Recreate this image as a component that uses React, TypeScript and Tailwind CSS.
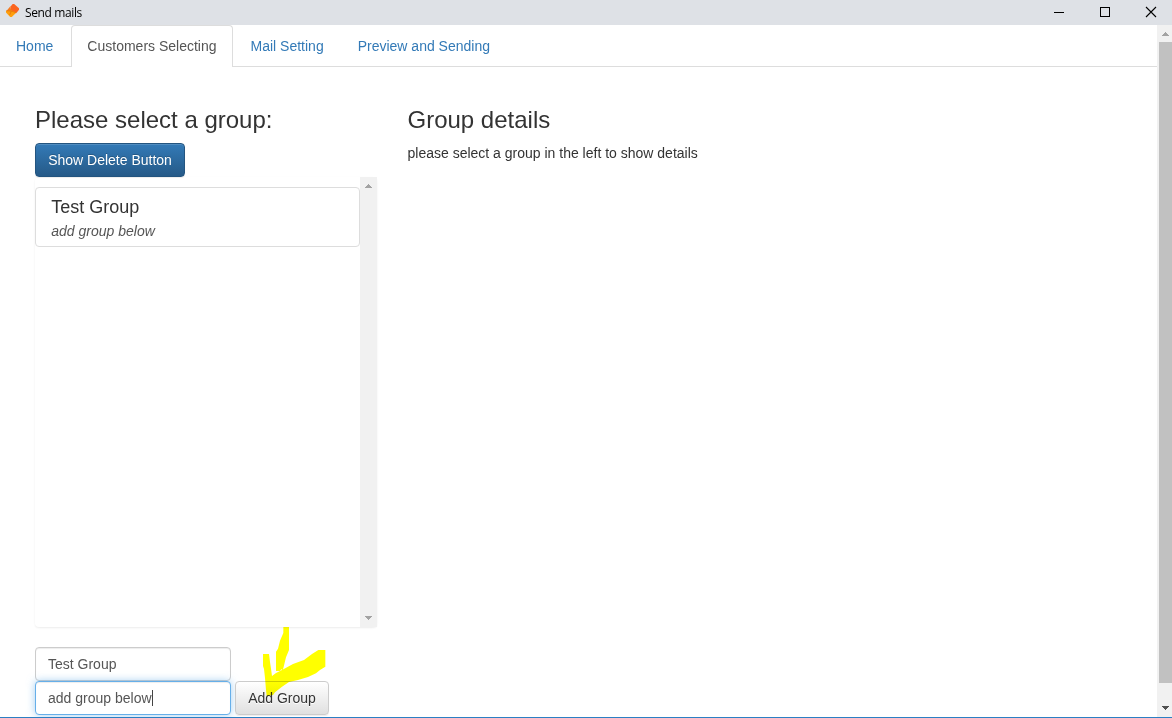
import React from "react";

const tabs = ["Home", "Customers Selecting", "Mail Setting", "Preview and Sending"];

function TitleBar() {
  return (
    <header className="flex h-[25px] shrink-0 items-center bg-[#dee1e6] pl-[5px] text-black">
      <svg width="15" height="16" viewBox="0 0 15 16" className="mb-[3px]">
        <path d="M7.6 1 H9.2 L14 5.3 V6.8 L11.2 10.2 L6.2 8.6 L5.6 3.4 Z" fill="#fb641f" />
        <path d="M5.4 3.2 L6.4 8.4 L1.4 8 Z" fill="#f47a20" />
        <path d="M1 7.8 L6.6 7.6 L11.4 9.6 L6.8 14 H5.2 L1 9.6 Z" fill="#ff9f0c" />
        <path d="M1.4 7.8 L6.4 8 L11 9.8 M6.4 8 L4.6 12" stroke="#e0700f" strokeWidth="0.7" fill="none" />
      </svg>
      <span className="ml-[5px] font-['Open_Sans',sans-serif] text-[12px] leading-[16px] tracking-[-0.38px]">Send mails</span>
      <div className="ml-auto flex">
        <svg width="46" height="25" viewBox="0 0 46 25" shapeRendering="crispEdges">
          <path d="M20 12.5h10" stroke="#000" />
        </svg>
        <svg width="46" height="25" viewBox="0 0 46 25" shapeRendering="crispEdges">
          <rect x="20.5" y="7.5" width="9" height="9" fill="none" stroke="#000" />
        </svg>
        <svg width="46" height="25" viewBox="0 0 46 25">
          <path d="M20 7l10 10M30 7l-10 10" stroke="#000" strokeWidth="1.1" />
        </svg>
      </div>
    </header>
  );
}

function Arrow({ down = false, dark = false }: { down?: boolean; dark?: boolean }) {
  return (
    <svg width="7" height="4" viewBox="0 0 7 4" shapeRendering="crispEdges" fill={dark ? "#505050" : "#a3a3a3"}>
      <path d={down ? "M0 0h7v1h-1v1h-1v1h-1v1h-1v-1h-1v-1h-1v-1h-1z" : "M0 4h7v-1h-1v-1h-1v-1h-1v-1h-1v1h-1v1h-1v1h-1z"} />
    </svg>
  );
}

export default function App() {
  return (
    <div className="relative flex h-[718px] w-[1172px] flex-col overflow-hidden bg-white font-['Liberation_Sans',Arial,sans-serif] text-[14px] leading-[20px] text-[#333]">
      <TitleBar />
      <div className="flex min-h-0 flex-1">
        <main className="flex w-[1157px] flex-col">
          <nav className="flex h-[42px] shrink-0 border-b border-[#ddd]">
            {tabs.map((tab, i) => (
              <a
                key={tab}
                className={
                  i === 1
                    ? "mr-[2px] h-[42px] rounded-t-[4px] border border-b-0 border-[#ddd] bg-white px-[15px] pt-[10px] text-[#555]"
                    : "mr-[2px] h-[42px] px-[16px] pt-[11px] text-[#337ab7]"
                }
              >
                {tab}
              </a>
            ))}
          </nav>
          <div className="flex pl-[35px] pt-[40px]">
            <section className="w-[342px]">
              <h3 className="mb-[10px] h-[26px] text-[24px] leading-[26.4px]">Please select a group:</h3>
              <button className="block h-[34px] w-[150px] rounded-[4px] border border-[#245580] bg-linear-to-b from-[#337ab7] to-[#265a88] text-white shadow-[inset_0_1px_0_rgba(255,255,255,.15),0_1px_1px_rgba(0,0,0,.075)] [text-shadow:0_-1px_0_rgba(0,0,0,.2)]">
                Show Delete Button
              </button>
              <div className="flex h-[450px] rounded-[4px] shadow-[0_1px_2px_rgba(0,0,0,.075)]">
                <div className="w-[325px] pt-[10px]">
                  <div className="h-[60px] rounded-[4px] border border-[#ddd] bg-white pr-[15px] pl-[15.3px] pt-[9px]">
                    <h4 className="mb-[5px] h-[19px] text-[18px] leading-[20px]">Test Group</h4>
                    <p className="leading-[20px] text-[#555] italic">add group below</p>
                  </div>
                </div>
                <div className="flex w-[17px] flex-col items-center justify-between bg-[#f1f1f1] pt-[7px] pb-[7px]">
                  <Arrow />
                  <Arrow down />
                </div>
              </div>
              <div className="mt-[20px] flex h-[34px] w-[196px] items-center rounded-[4px] border border-[#ccc] bg-white px-[12px] text-[#555] shadow-[inset_0_1px_1px_rgba(0,0,0,.075)]">
                Test Group
              </div>
              <div className="flex gap-[4px]">
                <div className="flex h-[34px] w-[196px] items-center rounded-[4px] border border-[#66afe9] bg-white px-[12px] text-[#555] shadow-[inset_0_1px_1px_rgba(0,0,0,.075),0_0_8px_rgba(102,175,233,.6)]">
                  add group below
                  <span className="h-[16px] w-px bg-[#444]" />
                </div>
                <button className="h-[34px] w-[94px] rounded-[4px] border border-[#ccc] bg-linear-to-b from-white to-[#e0e0e0] text-[#333] shadow-[inset_0_1px_0_rgba(255,255,255,.15),0_1px_1px_rgba(0,0,0,.075)] [text-shadow:0_1px_0_#fff]">
                  Add Group
                </button>
              </div>
            </section>
            <section className="ml-[30.5px]">
              <h3 className="mb-[10px] h-[26px] text-[24px] leading-[26.4px]">Group details</h3>
              <p>please select a group in the left to show details</p>
            </section>
          </div>
        </main>
        <aside className="flex w-[15px] flex-col bg-[#f1f1f1] pl-[2px]">
          <div className="flex h-[17px] items-center pt-[1px] pl-[3px]">
            <Arrow />
          </div>
          <div className="h-[641px] bg-[#c1c1c1]" />
          <div className="pt-[23px] pl-[3px]">
            <Arrow down dark />
          </div>
        </aside>
      </div>
      <svg className="absolute top-[600px] left-[220px] mix-blend-multiply" width="180" height="118" viewBox="0 0 540 354" fill="#ff0">
        <path d="M190 81H207V150L203 160L198 172L190 205L187 213L185 207L180 213H168V155L174 146L180 122L190 99Z" />
        <path d="M129 162H147L150 186L153 206L156 228L168 219L186 210L219 192L252 180L276 162L295 150H316V200L300 210L288 220L264 231L234 240L207 246L186 260L165 277L159 285L140 288L138 270L135 234L132 207L129 198Z" />
      </svg>
      <div className="absolute bottom-0 left-0 h-px w-full bg-[#2b7fc3]" />
    </div>
  );
}
